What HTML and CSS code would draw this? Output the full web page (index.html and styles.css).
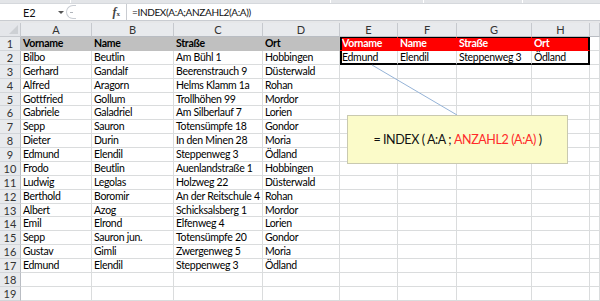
FILE: index.html
```html
<!DOCTYPE html>
<html lang="de">
<head>
<meta charset="utf-8">
<title>INDEX ANZAHL2</title>
<link rel="stylesheet" href="styles.css">
</head>
<body>
<div class="app">
  <div class="ribbon-edge">
    <span class="rsep"></span><span class="rsep"></span><span class="rsep"></span><span class="rsep"></span>
  </div>
  <div class="formula-bar">
    <div class="name-box"><span class="name">E2</span><span class="caret"></span></div>
    <div class="grip"><span class="dot"></span></div>
    <div class="fx-area"><span class="fx">f<span class="fx-sub">x</span></span></div>
    <div class="formula">=INDEX(A:A;ANZAHL2(A:A))</div>
  </div>
  <div class="sheet-wrap">
    <div class="sheet">
      <div class="corner"><span class="tri"></span></div>
      <div class="ch">A</div><div class="ch">B</div><div class="ch">C</div><div class="ch">D</div>
      <div class="ch">E</div><div class="ch">F</div><div class="ch">G</div><div class="ch">H</div><div class="ch"></div>

      <div class="rh">1</div>
      <div class="c head">Vorname</div><div class="c head">Name</div><div class="c head">Straße</div><div class="c head">Ort</div>
      <div class="c red r-tl">Vorname</div><div class="c red r-t">Name</div><div class="c red r-t">Straße</div><div class="c red r-tr">Ort</div><div class="c"></div>

      <div class="rh">2</div>
      <div class="c">Bilbo</div><div class="c">Beutlin</div><div class="c">Am Bühl 1</div><div class="c">Hobbingen</div>
      <div class="c r-bl">Edmund</div><div class="c r-b">Elendil</div><div class="c r-b">Steppenweg 3</div><div class="c r-br">Ödland</div><div class="c"></div>

      <div class="rh">3</div>
      <div class="c">Gerhard</div><div class="c">Gandalf</div><div class="c">Beerenstrauch 9</div><div class="c">Düsterwald</div>
      <div class="c"></div><div class="c"></div><div class="c"></div><div class="c"></div><div class="c"></div>

      <div class="rh">4</div>
      <div class="c">Alfred</div><div class="c">Aragorn</div><div class="c">Helms Klamm 1a</div><div class="c">Rohan</div>
      <div class="c"></div><div class="c"></div><div class="c"></div><div class="c"></div><div class="c"></div>

      <div class="rh">5</div>
      <div class="c">Gottfried</div><div class="c">Gollum</div><div class="c">Trollhöhen 99</div><div class="c">Mordor</div>
      <div class="c"></div><div class="c"></div><div class="c"></div><div class="c"></div><div class="c"></div>

      <div class="rh">6</div>
      <div class="c">Gabriele</div><div class="c">Galadriel</div><div class="c">Am Silberlauf 7</div><div class="c">Lorien</div>
      <div class="c"></div><div class="c"></div><div class="c"></div><div class="c"></div><div class="c"></div>

      <div class="rh">7</div>
      <div class="c">Sepp</div><div class="c">Sauron</div><div class="c">Totensümpfe 18</div><div class="c">Gondor</div>
      <div class="c"></div><div class="c"></div><div class="c"></div><div class="c"></div><div class="c"></div>

      <div class="rh">8</div>
      <div class="c">Dieter</div><div class="c">Durin</div><div class="c">In den Minen 28</div><div class="c">Moria</div>
      <div class="c"></div><div class="c"></div><div class="c"></div><div class="c"></div><div class="c"></div>

      <div class="rh">9</div>
      <div class="c">Edmund</div><div class="c">Elendil</div><div class="c">Steppenweg 3</div><div class="c">Ödland</div>
      <div class="c"></div><div class="c"></div><div class="c"></div><div class="c"></div><div class="c"></div>

      <div class="rh">10</div>
      <div class="c">Frodo</div><div class="c">Beutlin</div><div class="c">Auenlandstraße 1</div><div class="c">Hobbingen</div>
      <div class="c"></div><div class="c"></div><div class="c"></div><div class="c"></div><div class="c"></div>

      <div class="rh">11</div>
      <div class="c">Ludwig</div><div class="c">Legolas</div><div class="c">Holzweg 22</div><div class="c">Düsterwald</div>
      <div class="c"></div><div class="c"></div><div class="c"></div><div class="c"></div><div class="c"></div>

      <div class="rh">12</div>
      <div class="c">Berthold</div><div class="c">Boromir</div><div class="c">An der Reitschule 4</div><div class="c">Rohan</div>
      <div class="c"></div><div class="c"></div><div class="c"></div><div class="c"></div><div class="c"></div>

      <div class="rh">13</div>
      <div class="c">Albert</div><div class="c">Azog</div><div class="c">Schicksalsberg 1</div><div class="c">Mordor</div>
      <div class="c"></div><div class="c"></div><div class="c"></div><div class="c"></div><div class="c"></div>

      <div class="rh">14</div>
      <div class="c">Emil</div><div class="c">Elrond</div><div class="c">Elfenweg 4</div><div class="c">Lorien</div>
      <div class="c"></div><div class="c"></div><div class="c"></div><div class="c"></div><div class="c"></div>

      <div class="rh">15</div>
      <div class="c">Sepp</div><div class="c">Sauron jun.</div><div class="c">Totensümpfe 20</div><div class="c">Gondor</div>
      <div class="c"></div><div class="c"></div><div class="c"></div><div class="c"></div><div class="c"></div>

      <div class="rh">16</div>
      <div class="c">Gustav</div><div class="c">Gimli</div><div class="c">Zwergenweg 5</div><div class="c">Moria</div>
      <div class="c"></div><div class="c"></div><div class="c"></div><div class="c"></div><div class="c"></div>

      <div class="rh">17</div>
      <div class="c">Edmund</div><div class="c">Elendil</div><div class="c">Steppenweg 3</div><div class="c">Ödland</div>
      <div class="c"></div><div class="c"></div><div class="c"></div><div class="c"></div><div class="c"></div>

      <div class="rh">18</div>
      <div class="c"></div><div class="c"></div><div class="c"></div><div class="c"></div>
      <div class="c"></div><div class="c"></div><div class="c"></div><div class="c"></div><div class="c"></div>

      <div class="rh">19</div>
      <div class="c"></div><div class="c"></div><div class="c"></div><div class="c"></div>
      <div class="c"></div><div class="c"></div><div class="c"></div><div class="c"></div><div class="c"></div>
    </div>

    <svg class="connector" width="600" height="280" viewBox="0 0 600 280">
      <line x1="372" y1="42" x2="457" y2="92" stroke="#95b3d7" stroke-width="1"/>
    </svg>
    <div class="callout">= INDEX ( A:A ; <span class="hl">ANZAHL2 (A:A)</span> )</div>
  </div>
</div>
</body>
</html>
```

FILE: styles.css
```css
* { box-sizing: border-box; }

html, body {
  margin: 0;
  padding: 0;
  background: #ffffff;
}

.app {
  width: 600px;
  height: 301px;
  overflow: hidden;
  background: #e6e7e9;
  font-family: Lato, "Liberation Sans", sans-serif;
  font-size: 10.5px;
  letter-spacing: -0.3px;
  color: #000;
}

.ribbon-edge {
  height: 3px;
  display: flex;
  background: #e3e5e8;
}
.rsep {
  width: 1px;
  height: 3px;
  background: #ffffff;
}
.rsep:nth-child(1) { margin-left: 70px; }
.rsep:nth-child(2) { margin-left: 259px; }
.rsep:nth-child(3) { margin-left: 92px; }
.rsep:nth-child(4) { margin-left: 98px; }

.formula-bar {
  height: 18px;
  display: flex;
  background: #ffffff;
  border-top: 1px solid #d5d8dc;
  border-bottom: 1px solid #c9ccd1;
}

.name-box {
  width: 66px;
  display: flex;
  align-items: center;
  padding-left: 23px;
  position: relative;
}
.name {
  font-size: 11px;
  letter-spacing: 0;
  color: #111;
}
.caret {
  position: absolute;
  left: 58px;
  top: 7px;
  width: 0;
  height: 0;
  border-left: 3px solid transparent;
  border-right: 3px solid transparent;
  border-top: 3px solid #555;
}

.grip {
  width: 10px;
  margin: 1px 0;
  border: 1px solid #c9cdd3;
  border-right: none;
  border-radius: 8px 0 0 8px;
  display: flex;
  align-items: center;
  justify-content: center;
}
.dot {
  width: 3px;
  height: 1px;
  background: #b0b4ba;
}

.fx-area {
  width: 51px;
  display: flex;
  align-items: center;
  justify-content: flex-end;
  padding-right: 6px;
  border-right: 1px solid #c9ccd1;
}
.fx {
  font-family: "Liberation Serif", serif;
  font-style: italic;
  font-weight: bold;
  font-size: 12px;
  letter-spacing: 0;
  color: #444;
}
.fx-sub {
  font-size: 7px;
  font-style: normal;
}

.formula {
  flex: 1;
  display: flex;
  align-items: center;
  padding-left: 5px;
  font-size: 10px;
  letter-spacing: -0.35px;
  color: #111;
}

.sheet-wrap {
  position: relative;
  margin-top: 2px;
}

.sheet {
  display: grid;
  grid-template-columns: 21px 71px 82px 89px 77px 58px 59px 75px 58px 10px;
  grid-template-rows: 14px;
  grid-auto-rows: 13.875px;
  background: #ffffff;
}

.corner {
  background: #e4e6ea;
  border-right: 1px solid #c6c9ce;
  border-bottom: 1px solid #c6c9ce;
  position: relative;
}
.tri {
  position: absolute;
  right: 2px;
  bottom: 2px;
  width: 0;
  height: 0;
  border-left: 9px solid transparent;
  border-bottom: 9px solid #cdd0d4;
}

.ch {
  background: #e8eaed;
  border-right: 1px solid #c6c9ce;
  border-bottom: 1px solid #b9bdc3;
  text-align: center;
  color: #333;
  line-height: 13px;
  font-size: 11px;
  letter-spacing: 0;
}

.rh {
  background: #e8eaed;
  border-right: 1px solid #b9bdc3;
  border-bottom: 1px solid #d2d5d9;
  text-align: center;
  color: #333;
  line-height: 13px;
  font-size: 11px;
  letter-spacing: 0;
}

.c {
  border-right: 1px solid #dadcdd;
  border-bottom: 1px solid #dadcdd;
  padding-left: 2px;
  line-height: 13px;
  white-space: nowrap;
  overflow: visible;
}

.head {
  background: #c0c0c0;
  font-weight: bold;
  border-right-color: #c0c0c0;
  border-bottom-color: #c0c0c0;
}

.red {
  background: #ff0000;
  color: #ffffff;
  font-weight: bold;
  border-right-color: #ff0000;
  border-bottom-color: #ff0000;
}

.r-tl { box-shadow: inset 0 1px 0 #000, inset 2px 0 0 #000; }
.r-t  { box-shadow: inset 0 1px 0 #000; }
.r-tr { box-shadow: inset 0 1px 0 #000, inset -1px 0 0 #000; border-right: 1px solid #000; }
.r-bl { box-shadow: inset 2px 0 0 #000; border-bottom: 2px solid #000; }
.r-b  { border-bottom: 2px solid #000; }
.r-br { border-bottom: 2px solid #000; border-right: 2px solid #000; }

.connector {
  position: absolute;
  left: 0;
  top: 0;
  pointer-events: none;
}

.callout {
  position: absolute;
  left: 347px;
  top: 92px;
  width: 221px;
  height: 49px;
  background: #fbfbc9;
  border: 1px solid #c9c9b0;
  display: flex;
  align-items: center;
  justify-content: center;
  font-size: 12.5px;
  letter-spacing: -0.4px;
  color: #111;
  white-space: pre;
}
.hl { color: #ff2a2a; }
```
